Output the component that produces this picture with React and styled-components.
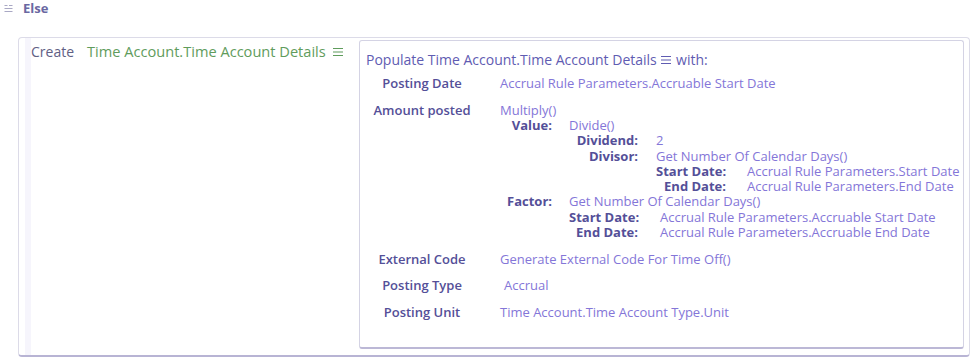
import React from 'react';
import styled, { createGlobalStyle } from 'styled-components';

const GlobalStyle = createGlobalStyle`
  body {
    margin: 0;
    background: #ffffff;
    font-family: 'Open Sans', 'Liberation Sans', sans-serif;
  }
`;

const LABEL = '#544f98';
const VALUE = '#8476d8';

const Page = styled.div`
  width: 974px;
  height: 357px;
  overflow: hidden;
`;

const ElseHeader = styled.div`
  display: flex;
  align-items: center;
  gap: 10px;
  height: 16px;
  padding: 0 0 0 4px;
  color: #6a68a2;
  font-weight: 700;
  font-size: 13px;
`;

const OuterBox = styled.div`
  display: flex;
  margin: 21px 4px 0 18px;
  height: 317px;
  border: 1px solid #dcdbe8;
  border-bottom: 2px solid #b8b4d4;
  border-radius: 4px;
  background: linear-gradient(90deg, #ffffff 0, #ffffff 6px, #f6f5fc 6px, #f6f5fc 12px, #ffffff 12px);
`;

const CreateCell = styled.div`
  display: flex;
  align-items: baseline;
  gap: 13px;
  width: 328px;
  padding: 3px 0 0 12px;
  font-size: 14px;
`;

const Keyword = styled.span`
  color: #616084;
`;

const Target = styled.span`
  color: #5f9c5c;
  white-space: nowrap;
  font-size: 14.6px;
  svg {
    margin-left: 2px;
  }
`;

const InnerBox = styled.div`
  flex: 1;
  margin: 2px 5px 6px 0;
  padding: 9px 0 0 6px;
  border: 1px solid #d4d3e4;
  border-bottom: 2px solid #bcb8d6;
  border-radius: 3px;
`;

const Title = styled.div`
  color: #5f5cb2;
  font-size: 14px;
  line-height: 20px;
  margin-bottom: 6px;
  white-space: nowrap;
`;

const Fields = styled.div`
  display: grid;
  grid-template-columns: 112px auto;
  column-gap: 22px;
  row-gap: 11.5px;
  margin-top: 1px;
  font-size: 13px;
  line-height: 15.25px;
  justify-content: start;
`;

const FieldLabel = styled.div`
  color: ${LABEL};
  font-weight: 600;
  text-align: center;
  white-space: nowrap;
`;

const Value = styled.div`
  color: ${VALUE};
  white-space: nowrap;
  padding-left: ${(p) => p.$indent || 0}px;
`;

const ArgGrid = styled.div`
  display: grid;
  grid-template-columns: ${(p) => p.$keyWidth}px auto;
  column-gap: ${(p) => p.$gap}px;
  justify-content: start;
`;

const ArgKey = styled.div`
  color: ${LABEL};
  font-weight: 700;
  font-size: 13px;
  text-align: right;
  white-space: nowrap;
`;

const MenuIcon = () => (
  <svg width="12" height="10" viewBox="0 0 12 10">
    <path d="M1 1.5h10M1 5h10M1 8.5h10" stroke="currentColor" strokeWidth="1.1" />
  </svg>
);

const TreeIcon = () => (
  <svg width="9" height="9" viewBox="0 0 9 9">
    <path d="M0.5 1.5h3M0.5 4.5h8M0.5 7.5h8M5 1.5h3.5" stroke="#a9a8c4" strokeWidth="1.2" />
  </svg>
);

const Call = ({ name, args, keyWidth, gap = 20 }) => (
  <Value>
    {name}
    {args && (
      <ArgGrid $keyWidth={keyWidth} $gap={gap}>
        {args.map((a, i) => (
          <React.Fragment key={i}>
            <ArgKey>{a.key}</ArgKey>
            {typeof a.value === 'string' ? <Value>{a.value}</Value> : <Call {...a.value} />}
          </React.Fragment>
        ))}
      </ArgGrid>
    )}
  </Value>
);

const amount = {
  name: 'Multiply()',
  keyWidth: 52,
  gap: 17,
  args: [
    {
      key: 'Value:',
      value: {
        name: 'Divide()',
        keyWidth: 69,
        gap: 18,
        args: [
          { key: 'Dividend:', value: '2' },
          {
            key: 'Divisor:',
            value: {
              name: 'Get Number Of Calendar Days()',
              keyWidth: 70,
              gap: 21,
              args: [
                { key: 'Start Date:', value: 'Accrual Rule Parameters.Start Date' },
                { key: 'End Date:', value: 'Accrual Rule Parameters.End Date' },
              ],
            },
          },
        ],
      },
    },
    {
      key: 'Factor:',
      value: {
        name: 'Get Number Of Calendar Days()',
        keyWidth: 69,
        gap: 22,
        args: [
          { key: 'Start Date:', value: 'Accrual Rule Parameters.Accruable Start Date' },
          { key: 'End Date:', value: 'Accrual Rule Parameters.Accruable End Date' },
        ],
      },
    },
  ],
};

const App = () => (
  <Page>
    <GlobalStyle />
    <ElseHeader>
      <TreeIcon />
      Else
    </ElseHeader>
    <OuterBox>
      <CreateCell>
        <Keyword>Create</Keyword>
        <Target>
          Time Account.Time Account Details <MenuIcon />
        </Target>
      </CreateCell>
      <InnerBox>
        <Title>
          Populate Time Account.Time Account Details <MenuIcon /> with:
        </Title>
        <Fields>
          <FieldLabel>Posting Date</FieldLabel>
          <Value>Accrual Rule Parameters.Accruable Start Date</Value>
          <FieldLabel>Amount posted</FieldLabel>
          <Call {...amount} />
          <FieldLabel>External Code</FieldLabel>
          <Value>Generate External Code For Time Off()</Value>
          <FieldLabel>Posting Type</FieldLabel>
          <Value $indent={4}>Accrual</Value>
          <FieldLabel>Posting Unit</FieldLabel>
          <Value>Time Account.Time Account Type.Unit</Value>
        </Fields>
      </InnerBox>
    </OuterBox>
  </Page>
);

export default App;
